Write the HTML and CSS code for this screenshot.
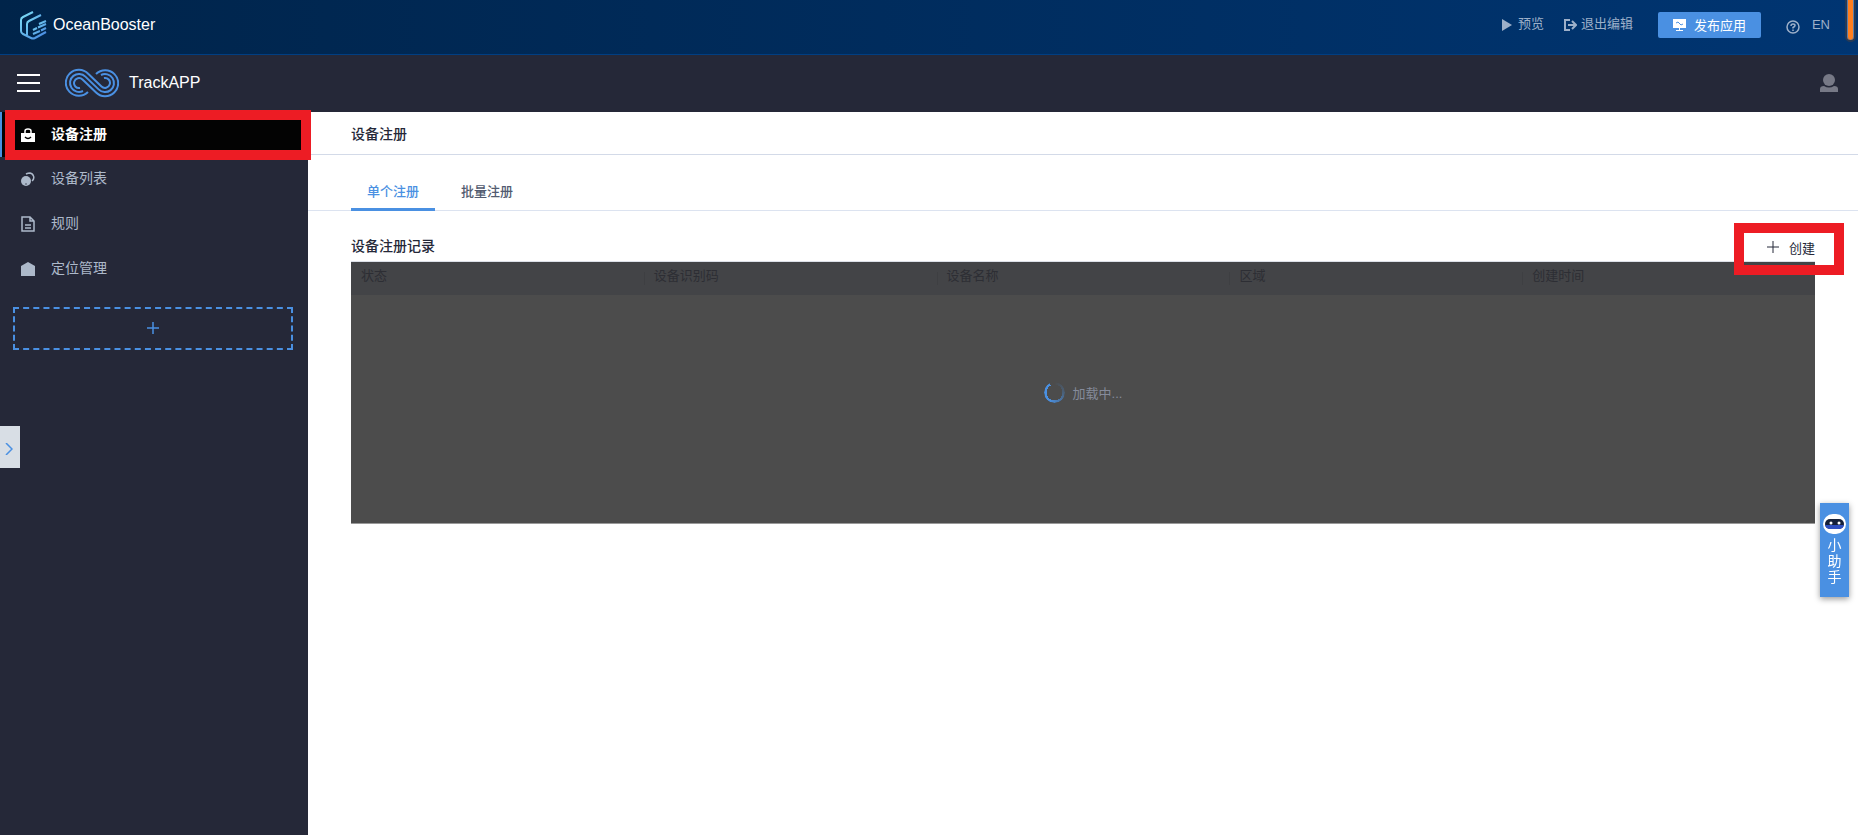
FILE: index.html
```html
<!DOCTYPE html>
<html lang="zh-CN">
<head>
    <meta charset="UTF-8">
    <meta name="viewport" content="width=device-width, initial-scale=1.0">
    <title>OceanBooster</title>
    <link rel="stylesheet" href="styles.css">
</head>
<body>
    <!-- Editor bar -->
    <header class="topbar">
        <a class="brand" href="#">
            <svg width="28" height="30" viewBox="0 0 28 30" fill="none" stroke-width="2">
                <defs>
                    <linearGradient id="brand-fill" x1="0" y1="0" x2="1" y2="1">
                        <stop offset="0" stop-color="#7fe0f5"/>
                        <stop offset="1" stop-color="#4484e0"/>
                    </linearGradient>
                </defs>
                <g stroke="url(#brand-fill)">
                    <path d="M14 2L4 7Q2 8 2 10V21Q2 23 4 24L12 28Q14 29 16 28L27 22"/>
                    <path d="M22 5L10 11Q8 12 8 14V25"/>
                    <path d="M20 14L27 11M14 20L18 18M19 17.500L27 14M14 24L21 21M22 20.500L27 18"/>
                </g>
            </svg>
            <span>OceanBooster</span>
        </a>
        <nav class="top-actions">
            <a class="top-link preview" href="#">
                <svg width="10" height="12" viewBox="0 0 10 12"><path d="M0 0L10 6L0 12z" fill="currentColor"/></svg>
                <span>预览</span>
            </a>
            <a class="top-link exit" href="#">
                <svg width="13" height="12" viewBox="0 0 13 12" fill="none" stroke="currentColor" stroke-width="2"><path d="M6 1H1V11H6M4 6H11M8 2L12 6L8 10"/></svg>
                <span>退出编辑</span>
            </a>
            <button class="publish" type="button">
                <svg width="13" height="12" viewBox="0 0 13 12"><path d="M0 0H13V9H0zM3 11H10V12H3zM6 9H7V11H6z" fill="#fff"/><path d="M3 4L5 3L8 6L10 5" fill="none" stroke="#4a90e2"/></svg>
                <span>发布应用</span>
            </button>
            <a class="top-link help" href="#" aria-label="帮助">
                <svg width="14" height="14" viewBox="0 0 14 14" fill="none" stroke="currentColor" stroke-width="1.5"><circle cx="7" cy="7" r="6"/><path d="M5 6Q5 4 7 4Q9 4 9 5.500Q9 6.500 7 7.500V8.500M7 9.500V11"/></svg>
            </a>
            <a class="top-link lang" href="#">EN</a>
        </nav>
        <div class="scroll-mark"></div>
    </header>

    <!-- App bar -->
    <header class="appbar">
        <button class="menu-button" type="button" aria-label="菜单"><i></i><i></i><i></i></button>
        <svg class="app-logo" width="54" height="30" viewBox="0 0 54 30" fill="none" stroke="#4a90e2" stroke-width="2">
            <path d="M23 24A13 13 0 1 1 23.200 5.800L36.500 18.500A5 5 0 1 0 39 10"/>
            <path d="M18 23A9 9 0 1 1 20.400 8.600L33.600 21.400A9 9 0 1 0 36 7"/>
            <path d="M15 20A5 5 0 1 1 17.500 11.500L30.800 24.200A13 13 0 1 0 31 6"/>
        </svg>
        <span class="app-name">TrackAPP</span>
        <button class="user-button" type="button" aria-label="用户">
            <svg width="18" height="18" viewBox="0 0 18 18" fill="#777986"><circle cx="9" cy="6" r="6"/><path d="M0 18V15Q0 12 4 12Q9 15 14 12Q18 12 18 15V18z"/></svg>
        </button>
    </header>

    <div class="layout">
        <aside class="sidebar">
            <nav>
                <a class="side-item active" href="#">
                    <svg width="14" height="14" viewBox="0 0 14 14"><path d="M0 5H14V14H0z" fill="currentColor"/><path d="M4 5V3Q4 1 7 1Q10 1 10 3V5" fill="none" stroke="currentColor" stroke-width="1.500"/><path d="M4 9Q7 12 10 9" fill="none" stroke="#000" stroke-width="1.500"/></svg>
                    <span>设备注册</span>
                </a>
                <a class="side-item" href="#">
                    <svg width="14" height="14" viewBox="0 0 14 14"><circle cx="5" cy="9" r="5" fill="currentColor"/><path d="M5 2Q7 1 9 1A4.500 4.500 0 0 1 11 9" fill="none" stroke="currentColor" stroke-width="1.500"/><circle cx="5" cy="12" r=".7" fill="#252838"/></svg>
                    <span>设备列表</span>
                </a>
                <a class="side-item" href="#">
                    <svg width="14" height="16" viewBox="0 0 14 16" fill="none" stroke="currentColor" stroke-width="1.500"><path d="M1 1H9L13 5V15H1zM9 1V5H13M4 9H10M4 12H10"/></svg>
                    <span>规则</span>
                </a>
                <a class="side-item" href="#">
                    <svg width="14" height="14" viewBox="0 0 14 14"><path d="M7 0L14 4V14H0V4z" fill="currentColor"/></svg>
                    <span>定位管理</span>
                </a>
            </nav>
            <button class="add-page" type="button" aria-label="添加">
                <svg width="12" height="12" viewBox="0 0 12 12" stroke="currentColor" stroke-width="1.500"><path d="M6 0V12M0 6H12"/></svg>
            </button>
            <div class="highlight highlight-side"></div>
        </aside>

        <main class="content">
            <h1 class="page-title">设备注册</h1>
            <nav class="tabs">
                <a class="tab selected" href="#">单个注册</a>
                <a class="tab" href="#">批量注册</a>
            </nav>
            <section class="records">
                <div class="records-head">
                    <h2>设备注册记录</h2>
                    <button class="create" type="button">
                        <svg width="12" height="12" viewBox="0 0 12 12" stroke="currentColor"><path d="M6 0V12M0 6H12"/></svg>
                        <span>创建</span>
                    </button>
                    <div class="highlight highlight-create"></div>
                </div>
                <div class="table-box">
                    <table>
                        <thead>
                            <tr>
                                <th>状态</th>
                                <th>设备识别码</th>
                                <th>设备名称</th>
                                <th>区域</th>
                                <th>创建时间</th>
                            </tr>
                        </thead>
                    </table>
                    <div class="loading">
                        <span class="spinner"></span>
                        <span>加载中...</span>
                    </div>
                </div>
            </section>
        </main>
    </div>

    <!-- Floating controls -->
    <button class="drawer-toggle" type="button" aria-label="展开">
        <svg width="8" height="12" viewBox="0 0 8 12" fill="none" stroke="#4a90e2" stroke-width="1.500"><path d="M1 0L7 6L1 12"/></svg>
    </button>
    <button class="assistant" type="button">
        <svg width="23" height="20" viewBox="0 0 23 20"><rect width="23" height="20" rx="10" fill="#fff"/><rect x="2" y="5" width="19" height="10" rx="5" fill="#15203a"/><path d="M2 11H21Q20 15 16 15H7Q3 15 2 11z" fill="#2f4fc0"/><circle cx="8" cy="9" r="1.500" fill="#fff"/><circle cx="16" cy="9" r="1.500" fill="#fff"/></svg>
        <span>小助手</span>
    </button>
</body>
</html>
```
FILE: styles.css
```css
* {
    box-sizing: border-box;
}
body {
    margin: 0;
    min-height: 100vh;
    display: flex;
    flex-direction: column;
    font-family: "Liberation Sans", "Noto Sans CJK SC", sans-serif;
    font-size: 14px;
    color: #252838;
    background-color: #fff;
}
a {
    color: inherit;
    text-decoration: none;
}
button {
    padding: 0;
    border: none;
    background: none;
    font-family: inherit;
    color: inherit;
    cursor: pointer;
}
svg {
    display: block;
    flex: none;
}

/* Editor bar */
.topbar {
    position: relative;
    display: flex;
    align-items: center;
    justify-content: space-between;
    height: 55px;
    padding: 0 28px 4px 19px;
    background: linear-gradient(90deg, #00244a, #003572);
    border-bottom: 1px solid #003e82;
}
.brand {
    display: flex;
    align-items: center;
    gap: 6px;
    font-size: 16px;
    color: #fff;
}
.top-actions {
    display: flex;
    align-items: center;
    font-size: 13px;
    line-height: 18px;
    color: #9db0c9;
}
.top-link,
.publish {
    display: flex;
    align-items: center;
}
.top-link span,
.publish span {
    padding-bottom: 2px;
}
.preview {
    gap: 6px;
    margin-right: 20px;
}
.exit {
    gap: 4px;
    margin-right: 25px;
}
.publish {
    gap: 8px;
    height: 26px;
    padding: 0 15px;
    border-radius: 2px;
    background-color: #4a90e2;
    color: #fff;
    font-size: 13px;
}
.help {
    margin: 3px 12px 0 25px;
}
.scroll-mark {
    position: absolute;
    top: 0;
    right: 2px;
    width: 11px;
    height: 42px;
    border: solid #273a55;
    border-width: 0 2px 2px;
    border-radius: 0 0 6px 6px;
    background-color: #ff7f1f;
    box-shadow: inset 1px 0 #5a7da8, inset -1px 0 #5a7da8;
}

/* App bar */
.appbar {
    display: flex;
    align-items: center;
    height: 57px;
    padding: 0 20px 2px 17px;
    background-color: #252838;
    color: #fff;
}
.menu-button {
    display: flex;
    flex-direction: column;
    gap: 6px;
    width: 23px;
    margin-right: 25px;
}
.menu-button i {
    width: 100%;
    height: 2px;
    background-color: #fff;
}
.app-name {
    margin-left: 10px;
    font-size: 16px;
}
.user-button {
    margin-left: auto;
}

/* Sidebar */
.layout {
    display: flex;
    flex: 1;
}
.sidebar {
    position: relative;
    flex: none;
    width: 308px;
    background-color: #252838;
}
.side-item {
    display: flex;
    align-items: center;
    gap: 16px;
    height: 45px;
    padding: 0 0 2px 21px;
    line-height: 20px;
    color: #adb9ca;
}
.side-item span {
    padding-bottom: 2px;
}
.side-item.active {
    padding: 0 0 0 19px;
    border-left: 2px solid #4a90e2;
    background-color: #030303;
    color: #fff;
    font-weight: bold;
}
.add-page {
    display: flex;
    align-items: center;
    justify-content: center;
    width: 280px;
    height: 43px;
    margin: 15px 0 0 13px;
    padding-bottom: 2px;
    border: 2px dashed #4a90e2;
    color: #4a90e2;
}
.highlight {
    position: absolute;
    z-index: 2;
    border: 10px solid #ed1c24;
    pointer-events: none;
}
.highlight-side {
    top: -2px;
    left: 5px;
    width: 306px;
    height: 50px;
}
.highlight-create {
    top: -12px;
    right: -29px;
    width: 110px;
    height: 52px;
}

/* Content */
.content {
    flex: 1;
    min-width: 0;
}
.page-title {
    height: 43px;
    margin: 0;
    padding-left: 43px;
    border-bottom: 1px solid #d3dae8;
    font-size: 14px;
    font-weight: 500;
    line-height: 44px;
}
.tabs {
    display: flex;
    gap: 10px;
    height: 56px;
    padding: 17px 43px 0;
    border-bottom: 1px solid #dce3f0;
}
.tab {
    height: 39px;
    padding: 0 16px;
    font-size: 13px;
    font-weight: 500;
    line-height: 40px;
    color: #525b70;
}
.tab.selected {
    border-bottom: 3px solid #4a90e2;
    color: #4a90e2;
}
.records {
    padding: 24px 43px 0;
}
.records-head {
    position: relative;
    display: flex;
    align-items: center;
    justify-content: space-between;
    height: 26px;
    padding-bottom: 2px;
}
.records-head h2 {
    margin: 0;
    padding-bottom: 2px;
    font-size: 14px;
    font-weight: 500;
    line-height: 20px;
}
.create {
    display: flex;
    align-items: center;
    gap: 10px;
    font-size: 13px;
}
.table-box {
    display: flex;
    flex-direction: column;
    height: 263px;
    border-top: 1px solid #dce0e8;
    border-bottom: 1px solid #999;
    background-color: #4c4c4c;
}
table {
    width: 100%;
    table-layout: fixed;
    border-collapse: collapse;
}
th {
    height: 33px;
    padding: 0 0 5px 10px;
    background-color: #434447;
    color: #2d2e34;
    font-size: 13px;
    font-weight: normal;
    line-height: 18px;
    text-align: left;
}
th + th {
    background-image: linear-gradient(#3e3f42, #3e3f42);
    background-position: 0 10px;
    background-repeat: no-repeat;
    background-size: 1px 13px;
}
.loading {
    display: flex;
    flex: 1;
    align-items: center;
    justify-content: center;
    gap: 8px;
    padding-bottom: 33px;
    font-size: 13px;
    color: #858b9b;
}
.spinner {
    width: 21px;
    height: 21px;
    border-radius: 50%;
    background: conic-gradient(#4c4c4c, #4a6078 25%, #4a90e2 60%, #4a90e2 92%, transparent 92%);
    -webkit-mask: radial-gradient(circle, transparent 8px, #000 8px);
    mask: radial-gradient(circle, transparent 8px, #000 8px);
}

/* Floating controls */
.drawer-toggle {
    position: fixed;
    top: 426px;
    left: 0;
    display: flex;
    align-items: center;
    width: 20px;
    height: 42px;
    padding: 3px 0 0 5px;
    background-color: #d8dee5;
}
.assistant {
    position: fixed;
    top: 503px;
    right: 9px;
    display: flex;
    flex-direction: column;
    align-items: center;
    gap: 3px;
    width: 29px;
    height: 94px;
    padding: 11px 7px 0;
    background-color: #4a90e2;
    box-shadow: 0 2px 6px rgba(0, 0, 0, 0.4);
    color: #fff;
    font-size: 14px;
    line-height: 16px;
}
```
